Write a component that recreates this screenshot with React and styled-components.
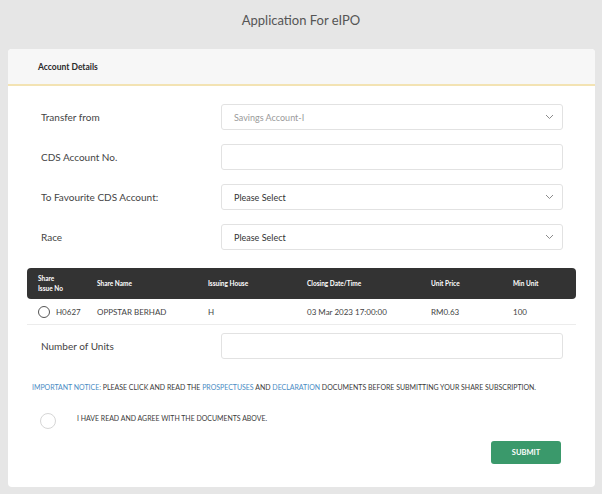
import React from 'react';
import styled, { createGlobalStyle } from 'styled-components';

const GlobalStyle = createGlobalStyle`
    body {
        margin: 0;
        background-color: #e6e6e6;
        font-family: 'Lato', 'Liberation Sans', Arial, sans-serif;
    }
`;

const Page = styled.div`
    width: 602px;
    min-height: 494px;
    padding-bottom: 6px;
`;

const Title = styled.h1`
    margin: 0;
    height: 49px;
    padding-top: 12px;
    box-sizing: border-box;
    text-align: center;
    font-size: 13px;
    font-weight: 400;
    color: #555555;
`;

const Card = styled.section`
    margin: 0 7px 0 8px;
    background-color: #ffffff;
    border-radius: 4px;
    overflow: hidden;
    padding-bottom: 23px;
`;

const CardHeader = styled.div`
    height: 35px;
    display: flex;
    align-items: center;
    padding-left: 30px;
    background-color: #f7f7f7;
    border-bottom: 2px solid #f3e3b3;
    font-size: 8.5px;
    font-weight: 700;
    color: #2a2a2a;
`;

const Form = styled.div`
    display: flex;
    flex-direction: column;
    gap: 14px;
    padding: 18px 32px 0 33px;
`;

const FormRow = styled.div`
    display: grid;
    grid-template-columns: 180px 1fr;
    align-items: center;
`;

const Label = styled.label`
    font-size: 10px;
    color: #444444;
`;

const Field = styled.div`
    height: 26px;
    box-sizing: border-box;
    display: flex;
    align-items: center;
    justify-content: space-between;
    padding: 0 8px 0 12px;
    border: 1px solid #e2e2e2;
    border-radius: 3px;
    background-color: #ffffff;
    font-size: 9px;
    color: ${p => (p.$muted ? '#9a9a9a' : '#333333')};
`;

const Table = styled.div`
    margin: 18px 19px 0 19px;
`;

const Cols = styled.div`
    display: grid;
    grid-template-columns: 59px 111px 99px 124px 82px 1fr;
    padding-left: 11px;
    align-items: center;
`;

const HeadRow = styled(Cols)`
    height: 31px;
    background-color: #333333;
    border-radius: 4px;
    color: #ffffff;
    font-size: 6.5px;
    font-weight: 700;
    line-height: 1.45;
`;

const DataRow = styled(Cols)`
    height: 25px;
    border-bottom: 1px solid #ececec;
    font-size: 8px;
    color: #444444;
`;

const IssueCell = styled.div`
    display: flex;
    align-items: center;
    gap: 6px;
`;

const Radio = styled.span`
    display: inline-block;
    width: ${p => p.$size}px;
    height: ${p => p.$size}px;
    box-sizing: border-box;
    border-radius: 50%;
    border: ${p => (p.$light ? '1px solid #d6d6d6' : '1px solid #555555')};
    background-color: #ffffff;
    flex-shrink: 0;
`;

const UnitsForm = styled(Form)`
    padding-top: 8px;
`;

const Notice = styled.p`
    margin: 24px 0 0 24px;
    font-size: 6.97px;
    text-transform: uppercase;
    color: #3a3a3a;
`;

const Link = styled.span`
    color: #4a8cc4;
`;

const Agree = styled.div`
    display: flex;
    align-items: center;
    gap: 21px;
    margin: 22px 0 0 32px;
    font-size: 6.95px;
    color: #3a3a3a;
    text-transform: uppercase;
`;

const AgreeText = styled.span`
    margin-top: -6px;
`;

const Actions = styled.div`
    display: flex;
    justify-content: flex-end;
    padding-right: 34px;
    margin-top: 12px;
`;

const SubmitButton = styled.button`
    width: 70px;
    height: 23px;
    border: none;
    border-radius: 3px;
    background-color: #3a996b;
    color: #ffffff;
    font-family: 'Lato', 'Liberation Sans', Arial, sans-serif;
    font-size: 7.5px;
    font-weight: 700;
    cursor: pointer;
`;

const Chevron = () => (
    <svg width="9" height="6" viewBox="0 0 9 6">
        <polyline points="1,1 4.5,4.5 8,1" fill="none" stroke="#8a8a8a" strokeWidth="1" />
    </svg>
);

const App = () => {
    const rows = [
        { label: 'Transfer from', value: 'Savings Account-I', select: true, muted: true },
        { label: 'CDS Account No.', value: '', select: false },
        { label: 'To Favourite CDS Account:', value: 'Please Select', select: true },
        { label: 'Race', value: 'Please Select', select: true },
    ];

    return (
        <Page>
            <GlobalStyle />
            <Title>Application For eIPO</Title>
            <Card>
                <CardHeader>Account Details</CardHeader>
                <Form>
                    {rows.map(r => (
                        <FormRow key={r.label}>
                            <Label>{r.label}</Label>
                            <Field $muted={r.muted}>
                                <span>{r.value}</span>
                                {r.select && <Chevron />}
                            </Field>
                        </FormRow>
                    ))}
                </Form>
                <Table>
                    <HeadRow>
                        <span>Share<br />Issue No</span>
                        <span>Share Name</span>
                        <span>Issuing House</span>
                        <span>Closing Date/Time</span>
                        <span>Unit Price</span>
                        <span>Min Unit</span>
                    </HeadRow>
                    <DataRow>
                        <IssueCell>
                            <Radio $size={12} />
                            <span>H0627</span>
                        </IssueCell>
                        <span>OPPSTAR BERHAD</span>
                        <span>H</span>
                        <span>03 Mar 2023 17:00:00</span>
                        <span>RM0.63</span>
                        <span>100</span>
                    </DataRow>
                </Table>
                <UnitsForm>
                    <FormRow>
                        <Label>Number of Units</Label>
                        <Field />
                    </FormRow>
                </UnitsForm>
                <Notice>
                    <Link>Important Notice:</Link> Please click and read the{' '}
                    <Link>Prospectuses</Link> and <Link>Declaration</Link> documents before
                    submitting your share subscription.
                </Notice>
                <Agree>
                    <Radio $size={16} $light />
                    <AgreeText>I have read and agree with the documents above.</AgreeText>
                </Agree>
                <Actions>
                    <SubmitButton>SUBMIT</SubmitButton>
                </Actions>
            </Card>
        </Page>
    );
};

export default App;
